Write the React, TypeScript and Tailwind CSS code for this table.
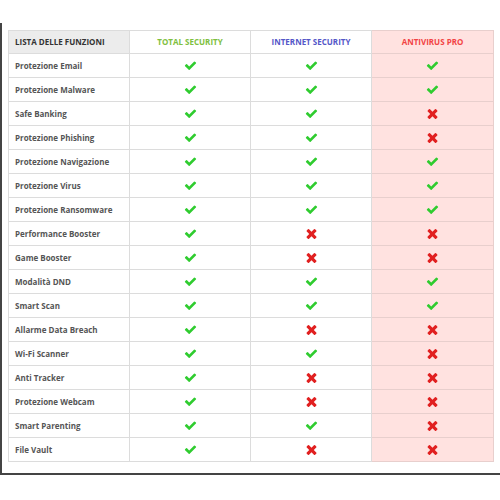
import React from 'react';

type Row = [string, boolean, boolean, boolean];

const rows: Row[] = [
  ['Protezione Email', true, true, true],
  ['Protezione Malware', true, true, true],
  ['Safe Banking', true, true, false],
  ['Protezione Phishing', true, true, false],
  ['Protezione Navigazione', true, true, true],
  ['Protezione Virus', true, true, true],
  ['Protezione Ransomware', true, true, true],
  ['Performance Booster', true, false, false],
  ['Game Booster', true, false, false],
  ['Modalità DND', true, true, true],
  ['Smart Scan', true, true, true],
  ['Allarme Data Breach', true, false, false],
  ['Wi-Fi Scanner', true, true, false],
  ['Anti Tracker', true, false, false],
  ['Protezione Webcam', true, false, false],
  ['Smart Parenting', true, true, false],
  ['File Vault', true, false, false],
];

const Check = () => (
  <svg viewBox="0 0 1792 1792" className="w-[13px] h-[13px] inline-block" fill="#2fcc2f">
    <path d="M1671 566q0 40-28 68l-724 724-136 136q-28 28-68 28t-68-28l-136-136-362-362q-28-28-28-68t28-68l136-136q28-28 68-28t68 28l294 295 656-657q28-28 68-28t68 28l136 136q28 28 28 68z" />
  </svg>
);

const Cross = () => (
  <svg viewBox="0 0 1408 1792" className="w-[13px] h-[15px] inline-block" fill="#e12020">
    <path d="M1298 1322q0 40-28 68l-136 136q-28 28-68 28t-68-28l-294-294-294 294q-28 28-68 28t-68-28l-136-136q-28-28-28-68t28-68l294-294-294-294q-28-28-28-68t28-68l136-136q28-28 68-28t68 28l294 294 294-294q28-28 68-28t68 28l136 136q28 28 28 68t-28 68l-294 294 294 294q28 28 28 68z" />
  </svg>
);

const Mark = ({ ok }: { ok: boolean }) => (ok ? <Check /> : <Cross />);

export default function App() {
  return (
    <div className="w-[500px] h-[500px] bg-white pt-[23px] font-['Open_Sans',sans-serif]">
      <div className="h-[452px] border-l-2 border-b-2 border-[#444] pl-[6px] pt-[7px]">
        <table className="border-collapse table-fixed w-[485px] text-[8px] font-bold">
          <thead>
            <tr className="h-[23px]">
              <th className="w-[121px] bg-[#ececec] border border-[#dcdcdc] text-left pl-[6px] text-[#333] font-bold">
                LISTA DELLE FUNZIONI
              </th>
              <th className="w-[121px] border border-[#dcdcdc] text-center text-[#80c040]">TOTAL SECURITY</th>
              <th className="w-[121px] border border-[#dcdcdc] text-center text-[#5457c8]">INTERNET SECURITY</th>
              <th className="w-[122px] border border-[#e8cfcd] bg-[#ffe2e0] text-center text-[#f24444]">ANTIVIRUS PRO</th>
            </tr>
          </thead>
          <tbody>
            {rows.map(([name, a, b, c]) => (
              <tr key={name} className="h-[24px]">
                <td className="border border-[#dcdcdc] pl-[6px] text-[#555]">{name}</td>
                <td className="border border-[#dcdcdc] text-center">
                  <Mark ok={a} />
                </td>
                <td className="border border-[#dcdcdc] text-center">
                  <Mark ok={b} />
                </td>
                <td className="border border-[#e8cfcd] bg-[#ffe2e0] text-center">
                  <Mark ok={c} />
                </td>
              </tr>
            ))}
          </tbody>
        </table>
      </div>
    </div>
  );
}
